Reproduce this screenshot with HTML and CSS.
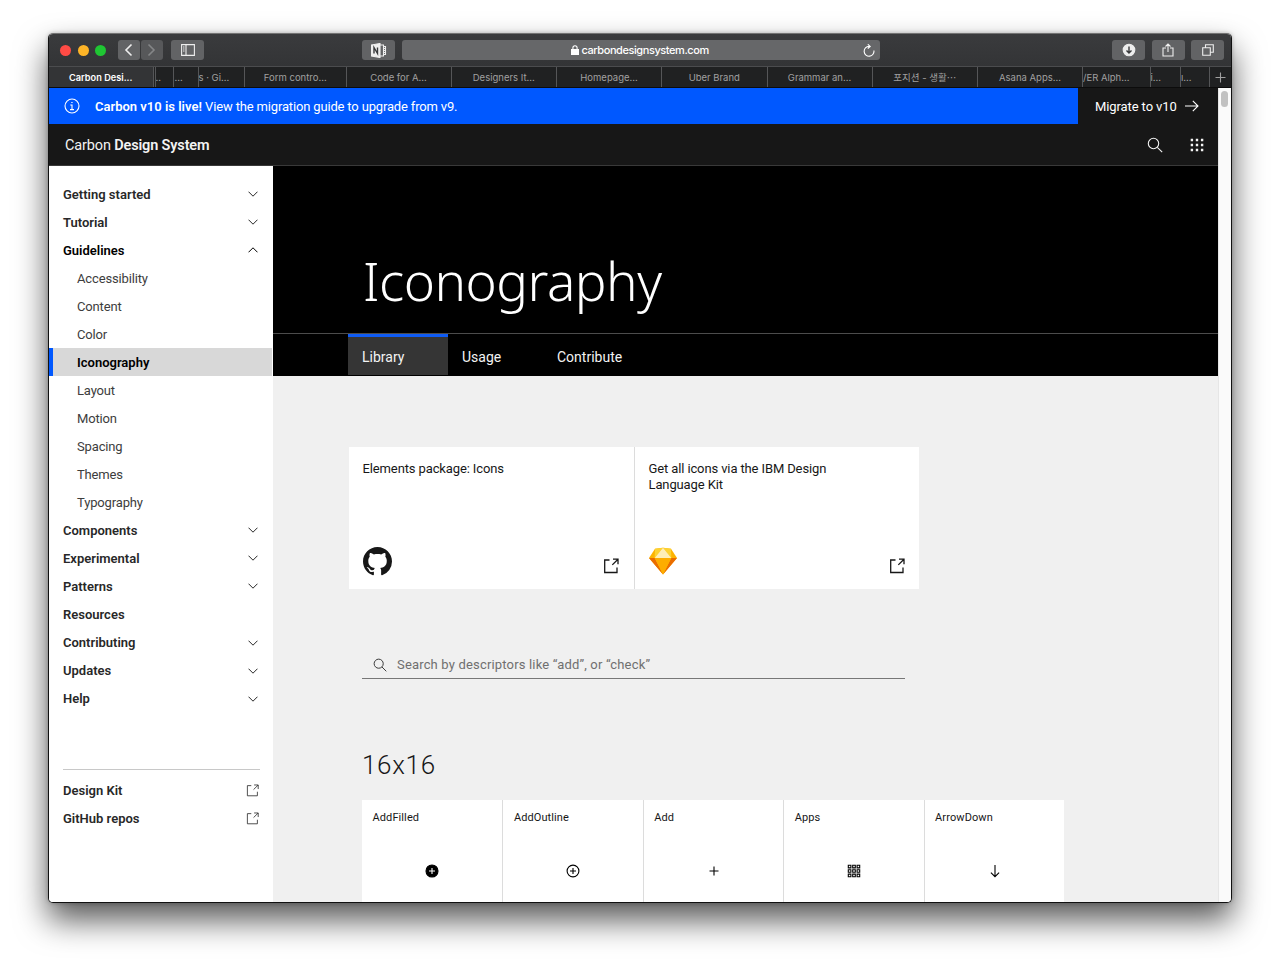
FILE: index.html
```html
<!DOCTYPE html>
<html lang="en">
<head>
  <meta charset="UTF-8">
  <meta name="viewport" content="width=device-width, initial-scale=1.0">
  <title>Carbon Design System</title>
  <link rel="stylesheet" href="styles.css">
</head>
<body>

  <!-- shared icons -->
  <svg class="sprite" width="0" height="0">
    <symbol id="down" viewBox="0 0 10 6"><path d="M.5.7 5 5.2 9.5.7"/></symbol>
    <symbol id="up" viewBox="0 0 10 6"><path d="M.5 5.3 5 .8l4.500 4.500"/></symbol>
    <symbol id="launch" viewBox="0 0 16 16"><path d="M6.500 2H1.700v12.500H14V9.500M10 1.200h5v5M15 1.200 9.300 6.900"/></symbol>
    <symbol id="search" viewBox="0 0 16 16"><circle cx="6.500" cy="6.500" r="5.200"/><path d="m10.300 10.300 4.900 4.900"/></symbol>
  </svg>

  <div class="window">
    <div class="toolbar">
      <div class="lights"><i class="red"></i><i class="yellow"></i><i class="green"></i></div>
      <div class="btn back"><svg width="9" height="14"><path d="M7.500 1.500 2 7l5.500 5.500"/></svg></div>
      <div class="btn forward"><svg width="9" height="14"><path d="M1.500 1.500 7 7l-5.500 5.500"/></svg></div>
      <div class="btn side"><svg width="14" height="12"><path d="M.6.600h12.800v10.800H.6zM5 .6v10.800M2 3h1.500M2 5h1.500M2 7h1.500"/></svg></div>
      <div class="btn note">
        <svg width="16" height="15"><path class="fill" d="M.5 2 9 .5v14L.5 13z"/><path d="M9 2h3.500v11H9M12.500 3.500h2v2h-2m2 0v2h-2m2 0v2h-2m2 0v2h-2"/><path class="dark" d="M3 10.500v-6l3.500 6v-6"/></svg>
      </div>
      <div class="url">
        <svg class="lock" width="8" height="10"><path class="fill" d="M.5 4.500h7v5h-7z"/><path d="M1.900 4V2.800a2.100 2.100 0 0 1 4.200 0V4"/></svg>
        <span>carbondesignsystem.com</span>
        <svg class="reload" width="12" height="13"><path d="M10.900 6.500A4.900 4.900 0 1 1 6 2.400h1M4.800.3 7.200 2.400 4.800 4.700"/></svg>
      </div>
      <div class="btn download"><svg width="14" height="14"><circle class="fill" cx="7" cy="7" r="5.800"/><path class="dark" d="M7 3.500v6.500M4.500 7.600 7 10.100l2.500-2.500"/></svg></div>
      <div class="btn share"><svg width="12" height="14"><path d="M4 5H1v8h10V5H8M6 9V1.200M3.500 3.500 6 1l2.500 2.500"/></svg></div>
      <div class="btn pages"><svg width="12" height="12"><path d="M.7 3.700h7.600v7.600H.7zM3.500 3.500V.7h7.800v7.600H8.500"/></svg></div>
    </div>

    <div class="tabs">
      <div class="active">Carbon Desi...</div>
      <div></div>
      <div>..</div>
      <div>...</div>
      <div>s · Gi...</div>
      <div>Form contro...</div>
      <div>Code for A...</div>
      <div>Designers It...</div>
      <div>Homepage...</div>
      <div>Uber Brand</div>
      <div>Grammar an...</div>
      <div>포지션 - 생활⋯</div>
      <div>Asana Apps...</div>
      <div class="cut"><span>/ER Alph...</span></div>
      <div class="cut">i...</div>
      <div class="cut">ı...</div>
      <div class="plus"><svg width="11" height="11"><path d="M5.500.5v10M.5 5.500h10"/></svg></div>
    </div>

    <div class="view">
      <div class="page">
        <div class="banner">
          <div class="message">
            <svg class="info" width="16" height="16"><circle cx="8" cy="8" r="7"/><path d="M6.300 7H8v4.500M6 11.600h4M7.300 4.500h1.300"/></svg>
            <p><strong>Carbon v10 is live!</strong> <span>View the migration guide to upgrade from v9.</span></p>
          </div>
          <a class="migrate">Migrate to v10 <svg width="14" height="12"><path d="M0 6h13M7.800.8 13 6l-5.200 5.200"/></svg></a>
        </div>

        <header>
          <div class="brand">Carbon <strong>Design System</strong></div>
          <svg class="find" width="16" height="16"><use href="#search"/></svg>
          <svg class="switcher" width="14" height="14"><path d="M.7 2h2.400M5.800 2h2.400M10.900 2h2.400M.7 7h2.400M5.800 7h2.400M10.900 7h2.400M.7 12h2.400M5.800 12h2.400M10.900 12h2.400"/></svg>
        </header>

        <div class="body">
          <nav>
            <a>Getting started <svg><use href="#down"/></svg></a>
            <a>Tutorial <svg><use href="#down"/></svg></a>
            <a class="open">Guidelines <svg><use href="#up"/></svg></a>
            <a class="sub">Accessibility</a>
            <a class="sub">Content</a>
            <a class="sub">Color</a>
            <a class="sub current">Iconography</a>
            <a class="sub">Layout</a>
            <a class="sub">Motion</a>
            <a class="sub">Spacing</a>
            <a class="sub">Themes</a>
            <a class="sub">Typography</a>
            <a>Components <svg><use href="#down"/></svg></a>
            <a>Experimental <svg><use href="#down"/></svg></a>
            <a>Patterns <svg><use href="#down"/></svg></a>
            <a>Resources</a>
            <a>Contributing <svg><use href="#down"/></svg></a>
            <a>Updates <svg><use href="#down"/></svg></a>
            <a>Help <svg><use href="#down"/></svg></a>
            <hr>
            <a class="ext">Design Kit <svg><use href="#launch"/></svg></a>
            <a class="ext">GitHub repos <svg><use href="#launch"/></svg></a>
          </nav>

          <main>
            <div class="hero">
              <h1>Iconography</h1>
              <div class="page-tabs">
                <a class="selected">Library</a>
                <a class="usage">Usage</a>
                <a>Contribute</a>
              </div>
            </div>

            <div class="tiles">
              <div class="tile">
                <p>Elements package: Icons</p>
                <svg class="github" viewBox="0 0 16 16"><path d="M8 0C3.580 0 0 3.580 0 8c0 3.540 2.290 6.530 5.470 7.590.4.070.55-.17.55-.38 0-.19-.01-.82-.01-1.490-2.010.37-2.530-.49-2.690-.94-.09-.23-.48-.94-.82-1.130-.28-.15-.68-.52-.01-.53.63-.01 1.080.58 1.230.82.72 1.210 1.870.87 2.330.66.07-.52.28-.87.51-1.070-1.780-.2-3.640-.89-3.640-3.950 0-.87.31-1.590.82-2.150-.08-.2-.36-1.020.08-2.120 0 0 .67-.21 2.200.82.64-.18 1.320-.27 2-.27s1.360.09 2 .27c1.530-1.040 2.200-.82 2.200-.82.44 1.100.16 1.920.08 2.120.51.56.82 1.270.82 2.150 0 3.070-1.870 3.750-3.650 3.950.29.25.54.73.54 1.480 0 1.070-.01 1.930-.01 2.200 0 .21.15.46.55.38A8.010 8.010 0 0 0 16 8c0-4.420-3.580-8-8-8z"/></svg>
                <svg class="launch"><use href="#launch"/></svg>
              </div>
              <div class="tile">
                <p>Get all icons via the IBM Design<br>Language Kit</p>
                <svg class="sketch" viewBox="0 0 28 27">
                  <path fill="#fdb300" d="M6 1.200 14 .3l8 .9 6 9.300L14 27 0 10.500z"/>
                  <path fill="#ea6c00" d="M0 10.500h5.700L14 27zM28 10.500h-5.700L14 27z"/>
                  <path fill="#fdad00" d="M5.700 10.500h16.600L14 27z"/>
                  <path fill="#fdd231" d="m6 1.200 8-.9-8.300 10.200zM22 1.200l-8-.9 8.300 10.200z"/>
                  <path fill="#feeeb7" d="m14 .3 8.300 10.200H5.700z"/>
                </svg>
                <svg class="launch"><use href="#launch"/></svg>
              </div>
            </div>

            <div class="search">
              <svg width="14" height="14"><use href="#search"/></svg>
              <span>Search by descriptors like “add”, or “check”</span>
            </div>

            <h2>16x16</h2>
            <div class="icons">
              <div class="icon"><p>AddFilled</p><svg><circle cx="7" cy="7" r="6" fill="#000"/><path class="light" d="M7 4v6M4 7h6"/></svg></div>
              <div class="icon"><p>AddOutline</p><svg><circle cx="7" cy="7" r="5.900"/><path d="M7 4v6M4 7h6"/></svg></div>
              <div class="icon"><p>Add</p><svg><path d="M7 2.500v9M2.500 7h9"/></svg></div>
              <div class="icon"><p>Apps</p><svg><path d="M1.300 1.300h2.600v2.600H1.300zM5.700 1.300h2.600v2.600H5.700zM10.100 1.300h2.600v2.600h-2.600zM1.300 5.700h2.600v2.600H1.300zM5.700 5.700h2.600v2.600H5.700zM10.100 5.700h2.600v2.600h-2.600zM1.300 10.100h2.600v2.600H1.300zM5.700 10.100h2.600v2.600H5.700zM10.100 10.100h2.600v2.600h-2.600z"/></svg></div>
              <div class="icon"><p>ArrowDown</p><svg><path d="M7 1v11.500M2.900 8.600 7 12.700l4.100-4.100"/></svg></div>
            </div>
          </main>
        </div>
      </div>
      <div class="scrollbar"><div class="thumb"></div></div>
    </div>
  </div>

</body>
</html>
```
FILE: styles.css
```css
* {
  box-sizing: border-box;
}

body {
  display: flow-root;
  margin: 0;
  height: 967px;
  background: #fff;
  color: #171717;
  font-family: Roboto, "Liberation Sans", "Noto Sans CJK KR", sans-serif;
  font-size: 13px;
  overflow: hidden;
}

p, h1, h2 {
  margin: 0;
  white-space: nowrap;
}

svg {
  display: block;
  flex: none;
  fill: none;
  stroke: currentColor;
  stroke-width: 1.1;
}

.sprite {
  position: absolute;
}

strong {
  font-weight: 600;
}

/* browser window */

.window {
  width: 1184px;
  height: 870px;
  margin: 33px 0 0 48px;
  border: 1px solid #111;
  border-top-color: #737373;
  border-radius: 5px;
  overflow: hidden;
  background: #fff;
  box-shadow: 0 17px 32px rgba(0, 0, 0, 0.66), 0 0 4px rgba(0, 0, 0, 0.25);
}

.toolbar {
  display: flex;
  align-items: center;
  height: 32px;
  padding: 0 7px 0 11px;
  background: linear-gradient(#3a3b3d, #333436);
  color: #eee;
}

.lights {
  display: flex;
  gap: 6.500px;
  width: 57.500px;
}

.lights i {
  width: 11px;
  height: 11px;
  border-radius: 50%;
}

.red { background: #ff4b45; }
.yellow { background: #fdb427; }
.green { background: #1fc633; }

.btn {
  display: flex;
  align-items: center;
  justify-content: center;
  flex: none;
  width: 33px;
  height: 20px;
  border-radius: 3px;
  background: #626365;
}

.back, .forward {
  width: 22px;
}

.back svg, .forward svg {
  stroke-width: 1.6;
}

.forward {
  margin-left: 1px;
  background: #57585a;
  color: #858688;
}

.side { margin-left: 8.500px; }
.note { margin-left: 158px; }
.share, .pages { margin-left: 6.500px; }
.download { margin-left: auto; }

.fill {
  fill: currentColor;
}

.dark {
  stroke: #38393b;
  stroke-width: 1.4;
}

.url {
  display: flex;
  align-items: center;
  width: 478px;
  height: 20px;
  margin-left: 6.500px;
  padding: 0 5px 0 169px;
  border-radius: 3px;
  background: #666769;
  color: #fff;
  font-family: Inter, sans-serif;
  font-size: 11px;
  font-weight: 500;
  letter-spacing: -0.430px;
}

.lock {
  margin-right: 3px;
}

.reload {
  margin-left: auto;
}

.tabs {
  display: grid;
  grid-template-columns: 104.500px 2px 18px 25px 46.500px 101.500px 105px 105.500px 105px 105.500px 105px 105.500px 105px 67.500px 30.500px 28.500px 1fr;
  height: 22px;
  border-top: 1px solid #4b4c4e;
  border-bottom: 1px solid #0c0c0c;
  background: #202122;
  color: #a0a0a0;
  font-family: Inter, "Noto Sans CJK KR", sans-serif;
  font-size: 9.500px;
}

.tabs div {
  display: flex;
  align-items: center;
  justify-content: center;
  min-width: 0;
  overflow: hidden;
  white-space: nowrap;
  border-right: 1px solid #555658;
}

.tabs div:nth-child(3), .tabs div:nth-child(4), .tabs div:nth-child(5), .tabs .cut {
  justify-content: flex-start;
}

.tabs div:nth-child(4) {
  padding-left: 1px;
}

.tabs .active {
  background: #333436;
  color: #fff;
  font-weight: 600;
  font-size: 9.200px;
}

.tabs .plus {
  border: 0;
}

.view {
  display: flex;
  height: 814px;
}

.page {
  width: 1169px;
}

.scrollbar {
  flex: 1;
  padding: 3px 0 0 2px;
  background: #fafafa;
  border-left: 1px solid #e6e6e6;
}

.thumb {
  width: 7px;
  height: 16px;
  border-radius: 4px;
  background: #c1c1c1;
}

/* site header */

.banner {
  display: flex;
  height: 36px;
  background: #171717;
  color: #fff;
}

.message {
  display: flex;
  align-items: center;
  width: 1029px;
  padding-left: 15px;
  background: #0058ff;
}

.message p {
  margin-left: 15px;
}

.message span {
  letter-spacing: -0.160px;
}

.migrate {
  display: flex;
  align-items: center;
  gap: 8px;
  margin-left: 17px;
  letter-spacing: -0.1px;
}

header {
  display: flex;
  align-items: center;
  height: 42px;
  padding: 0 14.500px 0 16px;
  background: #171717;
  border-bottom: 1px solid #393939;
  color: #f3f3f3;
}

.brand {
  padding-top: 1px;
  font-size: 14.500px;
  letter-spacing: -0.150px;
}

.find {
  margin-left: auto;
}

.switcher {
  margin-left: 27px;
  stroke-width: 2.400;
}

.body {
  display: flex;
  height: 736px;
}

/* side nav */

nav {
  width: 224px;
  padding: 14px 0 0;
  background: #fff;
}

nav a {
  display: flex;
  align-items: center;
  justify-content: space-between;
  height: 28.040px;
  padding: 0 15.500px 0 14px;
  color: #282828;
  font-weight: 600;
}

nav a svg {
  width: 10px;
  height: 6px;
  stroke-width: 1;
}

nav .open, nav .current {
  color: #000;
}

nav .sub {
  padding-left: 28px;
  font-weight: 400;
  color: #3d3d3d;
  letter-spacing: -0.150px;
}

nav .current {
  margin-right: 1px;
  padding-left: 24px;
  border-left: 4px solid #0058ff;
  background: #d8d8d8;
  font-weight: 600;
  color: #000;
  letter-spacing: 0;
}

nav hr {
  height: 1px;
  margin: 56.300px 13.500px 7px 14px;
  border: 0;
  background: #c8c8c8;
}

nav .ext {
  padding-right: 14px;
}

nav .ext svg {
  width: 13px;
  height: 13px;
}

/* content */

main {
  flex: 1;
  background: #f0f0f0;
  overflow: hidden;
}

.hero {
  height: 210px;
  background: #000;
  color: #fff;
}

h1 {
  height: 168px;
  padding: 78px 0 0 90px;
  border-bottom: 1px solid #4c4c4c;
  font-family: "Noto Sans", sans-serif;
  font-size: 53px;
  line-height: 74px;
  font-weight: 300;
  letter-spacing: -0.500px;
}

.page-tabs {
  display: flex;
  height: 41px;
  margin-left: 75px;
  font-size: 14px;
  line-height: 46px;
  color: #f3f3f3;
}

.page-tabs a {
  padding-left: 14px;
}

.page-tabs .selected {
  width: 100px;
  border-top: 3px solid #0f5cf5;
  background: #353535;
  line-height: 40px;
}

.page-tabs .usage {
  width: 95px;
}

.tiles {
  display: flex;
  margin: 71px 0 0 75.500px;
}

.tile {
  display: grid;
  grid-template-columns: 1fr auto;
  align-content: space-between;
  align-items: end;
  width: 286px;
  height: 142px;
  padding: 14px 14px 13px;
  background: #fff;
  border-right: 1px solid #dcdcdc;
}

.tile + .tile {
  width: 284.500px;
  border-right: 0;
}

.tile p {
  grid-column: 1 / 3;
  line-height: 16px;
  letter-spacing: -0.120px;
}

.github {
  width: 29px;
  height: 29px;
}

.github path {
  fill: #171717;
  stroke: none;
}

.sketch {
  width: 28px;
  height: 28px;
  stroke: none;
  margin-bottom: 1px;
}

.launch {
  width: 16px;
  height: 16px;
  margin: 0 0.500px 2px 0;
  stroke-width: 1.300;
}

.search {
  display: flex;
  align-items: center;
  width: 543px;
  height: 28px;
  margin: 62px 0 0 89px;
  padding-left: 10.500px;
  border-bottom: 1px solid #777;
  color: #6f6f6f;
}

.search svg {
  width: 14px;
  color: #333;
}

.search span {
  margin-left: 10.500px;
  letter-spacing: 0.170px;
}

h2 {
  margin: 67.500px 0 0 89px;
  height: 53.500px;
  font-size: 26px;
  line-height: 36px;
  font-weight: 300;
  letter-spacing: 0.700px;
}

.icons {
  display: flex;
  margin-left: 89px;
}

.icon {
  width: 140.400px;
  height: 140px;
  padding: 10px 0 0 10.500px;
  background: #fff;
  border-left: 1px solid #dcdcdc;
  font-size: 11px;
  letter-spacing: 0.1px;
}

.icon p {
  line-height: 16px;
}

.icon:first-child {
  border-left: 0;
}

.icon svg {
  width: 14px;
  height: 14px;
  margin: 37.500px 0 0 52.500px;
  color: #000;
}

.icon .light {
  stroke: #fff;
}
```
